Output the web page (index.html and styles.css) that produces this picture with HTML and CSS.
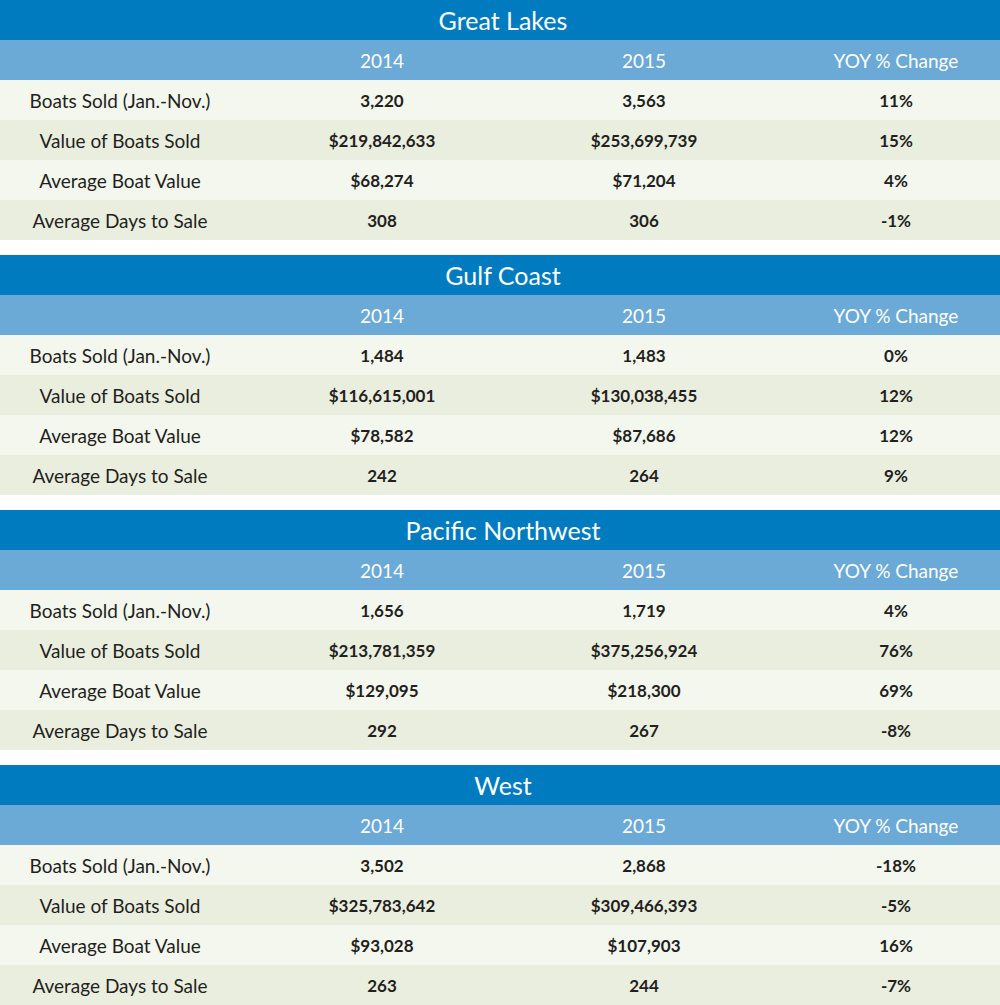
FILE: index.html
```html
<!DOCTYPE html>
<html>
<head>
<meta charset="utf-8">
<link rel="stylesheet" href="styles.css">
</head>
<body>
<div class="page">
  <section class="region">
    <div class="title">Great Lakes</div>
    <div class="row head"><div></div><div>2014</div><div>2015</div><div>YOY % Change</div></div>
    <div class="row light"><div class="label">Boats Sold (Jan.-Nov.)</div><div>3,220</div><div>3,563</div><div>11%</div></div>
    <div class="row dark"><div class="label">Value of Boats Sold</div><div>$219,842,633</div><div>$253,699,739</div><div>15%</div></div>
    <div class="row light"><div class="label">Average Boat Value</div><div>$68,274</div><div>$71,204</div><div>4%</div></div>
    <div class="row dark"><div class="label">Average Days to Sale</div><div>308</div><div>306</div><div>-1%</div></div>
  </section>
  <section class="region">
    <div class="title">Gulf Coast</div>
    <div class="row head"><div></div><div>2014</div><div>2015</div><div>YOY % Change</div></div>
    <div class="row light"><div class="label">Boats Sold (Jan.-Nov.)</div><div>1,484</div><div>1,483</div><div>0%</div></div>
    <div class="row dark"><div class="label">Value of Boats Sold</div><div>$116,615,001</div><div>$130,038,455</div><div>12%</div></div>
    <div class="row light"><div class="label">Average Boat Value</div><div>$78,582</div><div>$87,686</div><div>12%</div></div>
    <div class="row dark"><div class="label">Average Days to Sale</div><div>242</div><div>264</div><div>9%</div></div>
  </section>
  <section class="region">
    <div class="title">Pacific Northwest</div>
    <div class="row head"><div></div><div>2014</div><div>2015</div><div>YOY % Change</div></div>
    <div class="row light"><div class="label">Boats Sold (Jan.-Nov.)</div><div>1,656</div><div>1,719</div><div>4%</div></div>
    <div class="row dark"><div class="label">Value of Boats Sold</div><div>$213,781,359</div><div>$375,256,924</div><div>76%</div></div>
    <div class="row light"><div class="label">Average Boat Value</div><div>$129,095</div><div>$218,300</div><div>69%</div></div>
    <div class="row dark"><div class="label">Average Days to Sale</div><div>292</div><div>267</div><div>-8%</div></div>
  </section>
  <section class="region">
    <div class="title">West</div>
    <div class="row head"><div></div><div>2014</div><div>2015</div><div>YOY % Change</div></div>
    <div class="row light"><div class="label">Boats Sold (Jan.-Nov.)</div><div>3,502</div><div>2,868</div><div>-18%</div></div>
    <div class="row dark"><div class="label">Value of Boats Sold</div><div>$325,783,642</div><div>$309,466,393</div><div>-5%</div></div>
    <div class="row light"><div class="label">Average Boat Value</div><div>$93,028</div><div>$107,903</div><div>16%</div></div>
    <div class="row dark"><div class="label">Average Days to Sale</div><div>263</div><div>244</div><div>-7%</div></div>
  </section>
</div>
</body>
</html>
```
FILE: styles.css
```css
html, body {
  margin: 0;
  padding: 0;
  background: #ffffff;
}
.page {
  width: 1000px;
  display: flex;
  flex-direction: column;
  gap: 15px;
  font-family: Lato, "Open Sans", sans-serif;
  color: #231f20;
}
.region {
  display: flex;
  flex-direction: column;
}
.title {
  height: 40px;
  background: #007bbf;
  color: #ffffff;
  font-size: 25px;
  line-height: 40px;
  text-align: center;
  padding-left: 6px;
}
.row {
  height: 40px;
  display: grid;
  grid-template-columns: 240px 284px 240px 1fr;
  align-items: center;
  text-align: center;
  font-size: 17px;
  font-weight: 700;
}
.row > div:last-child {
  padding-left: 28px;
}
.row .label {
  font-weight: 400;
  font-size: 19px;
}
.head {
  background: #6ba9d6;
  color: #ffffff;
  font-weight: 400;
  font-size: 19px;
}
.light {
  background: #f4f7ee;
}
.dark {
  background: #eaeedf;
}
```
